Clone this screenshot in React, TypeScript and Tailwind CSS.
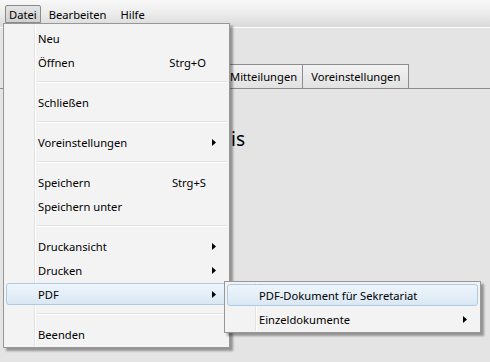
import React from 'react';

type Entry =
  | { kind: 'item'; label: string; shortcut?: string; sub?: boolean; active?: boolean }
  | { kind: 'sep' };

const dateiMenu: Entry[] = [
  { kind: 'item', label: 'Neu' },
  { kind: 'item', label: 'Öffnen', shortcut: 'Strg+O' },
  { kind: 'sep' },
  { kind: 'item', label: 'Schließen' },
  { kind: 'sep' },
  { kind: 'item', label: 'Voreinstellungen', sub: true },
  { kind: 'sep' },
  { kind: 'item', label: 'Speichern', shortcut: 'Strg+S' },
  { kind: 'item', label: 'Speichern unter' },
  { kind: 'sep' },
  { kind: 'item', label: 'Druckansicht', sub: true },
  { kind: 'item', label: 'Drucken', sub: true },
  { kind: 'item', label: 'PDF', sub: true, active: true },
  { kind: 'sep' },
  { kind: 'item', label: 'Beenden' },
];

const pdfMenu: Entry[] = [
  { kind: 'item', label: 'PDF-Dokument für Sekretariat', active: true },
  { kind: 'item', label: 'Einzeldokumente', sub: true },
];

function Arrow() {
  return (
    <svg width="4" height="7" viewBox="0 0 4 7" className="shrink-0">
      <path d="M0 0 L4 3.5 L0 7 Z" fill="#000" />
    </svg>
  );
}

function MenuRow({ entry }: { entry: Entry }) {
  if (entry.kind === 'sep') {
    return (
      <div className="h-[16px] flex flex-col justify-center pl-[33px] pr-[2px]">
        <div className="h-px bg-[#e0e0e0]" />
        <div className="h-px bg-white" />
      </div>
    );
  }
  return (
    <div className="h-[24px] px-[2px] flex items-center">
      <div
        className={`relative h-[22px] w-full flex items-center pt-[3px] rounded-[3px] border ${
          entry.active
            ? 'border-[#aecbe4] bg-gradient-to-b from-[#eef5fb] to-[#dae8f4]'
            : 'border-transparent'
        }`}
      >
        <span className="pl-[31px]">{entry.label}</span>
        {entry.shortcut && <span className="absolute right-[20px]">{entry.shortcut}</span>}
        {entry.sub && (
          <span className="absolute right-[10px] top-[7px] flex">
            <Arrow />
          </span>
        )}
      </div>
    </div>
  );
}

function Gutter() {
  return (
    <div className="absolute left-[30px] top-[1px] bottom-[1px] flex">
      <div className="w-px bg-[#e2e3e3]" />
      <div className="w-px bg-white" />
    </div>
  );
}

export default function App() {
  return (
    <div
      className="relative w-[490px] h-[362px] overflow-hidden bg-[#e4e4e4] text-[11.2px] text-black"
      style={{ fontFamily: '"Noto Sans", "Open Sans", sans-serif' }}
    >
      {/* Menu bar */}
      <div className="h-[28px] bg-gradient-to-b from-[#f8f8f8] via-[#ececec] to-[#d9d9d9] border-b border-white flex items-start pt-[5px] pl-[5px]">
        <div className="h-[18px] px-[3px] pt-[2px] flex items-center border border-[#8a8a8a] rounded-t-[2px] bg-gradient-to-b from-[#e4e4e4] to-[#d0d0d0]">
          Datei
        </div>
        <div className="h-[18px] pl-[8px] pr-[10px] pt-[2px] flex items-center">Bearbeiten</div>
        <div className="h-[18px] px-[4px] pt-[2px] flex items-center">Hilfe</div>
      </div>

      {/* Window content */}
      <div className="pt-[37px]">
        <div className="flex items-end h-[24px] border-b border-[#8d8d8d]">
          <div className="w-[224px]" />
          <div className="h-[24px] px-[5px] pt-[2px] flex items-center border border-b-0 border-[#8d8d8d] bg-gradient-to-b from-[#f2f2f2] to-[#e2e2e2]">
            Mitteilungen
          </div>
          <div className="h-[24px] px-[8px] pt-[2px] flex items-center border border-b-0 border-l-0 border-[#8d8d8d] bg-gradient-to-b from-[#f2f2f2] to-[#e2e2e2]">
            Voreinstellungen
          </div>
        </div>
        <div className="w-[245px] text-right mt-[36px] text-[19px] leading-[28px]">Inhaltsverzeichnis</div>
      </div>

      {/* Datei dropdown */}
      <div className="absolute left-[3px] top-[23px] w-[227px] border border-[#979797] bg-[#f3f3f3] pt-[2px] pb-[1px] shadow-[3px_3px_2px_rgba(0,0,0,0.35)]">
        <Gutter />
        {dateiMenu.map((e, i) => (
          <MenuRow key={i} entry={e} />
        ))}
      </div>

      {/* PDF submenu */}
      <div className="absolute left-[224px] top-[281px] w-[257px] border border-[#979797] bg-[#f3f3f3] py-[1px] shadow-[3px_3px_2px_rgba(0,0,0,0.35)]">
        <Gutter />
        {pdfMenu.map((e, i) => (
          <MenuRow key={i} entry={e} />
        ))}
      </div>
    </div>
  );
}
